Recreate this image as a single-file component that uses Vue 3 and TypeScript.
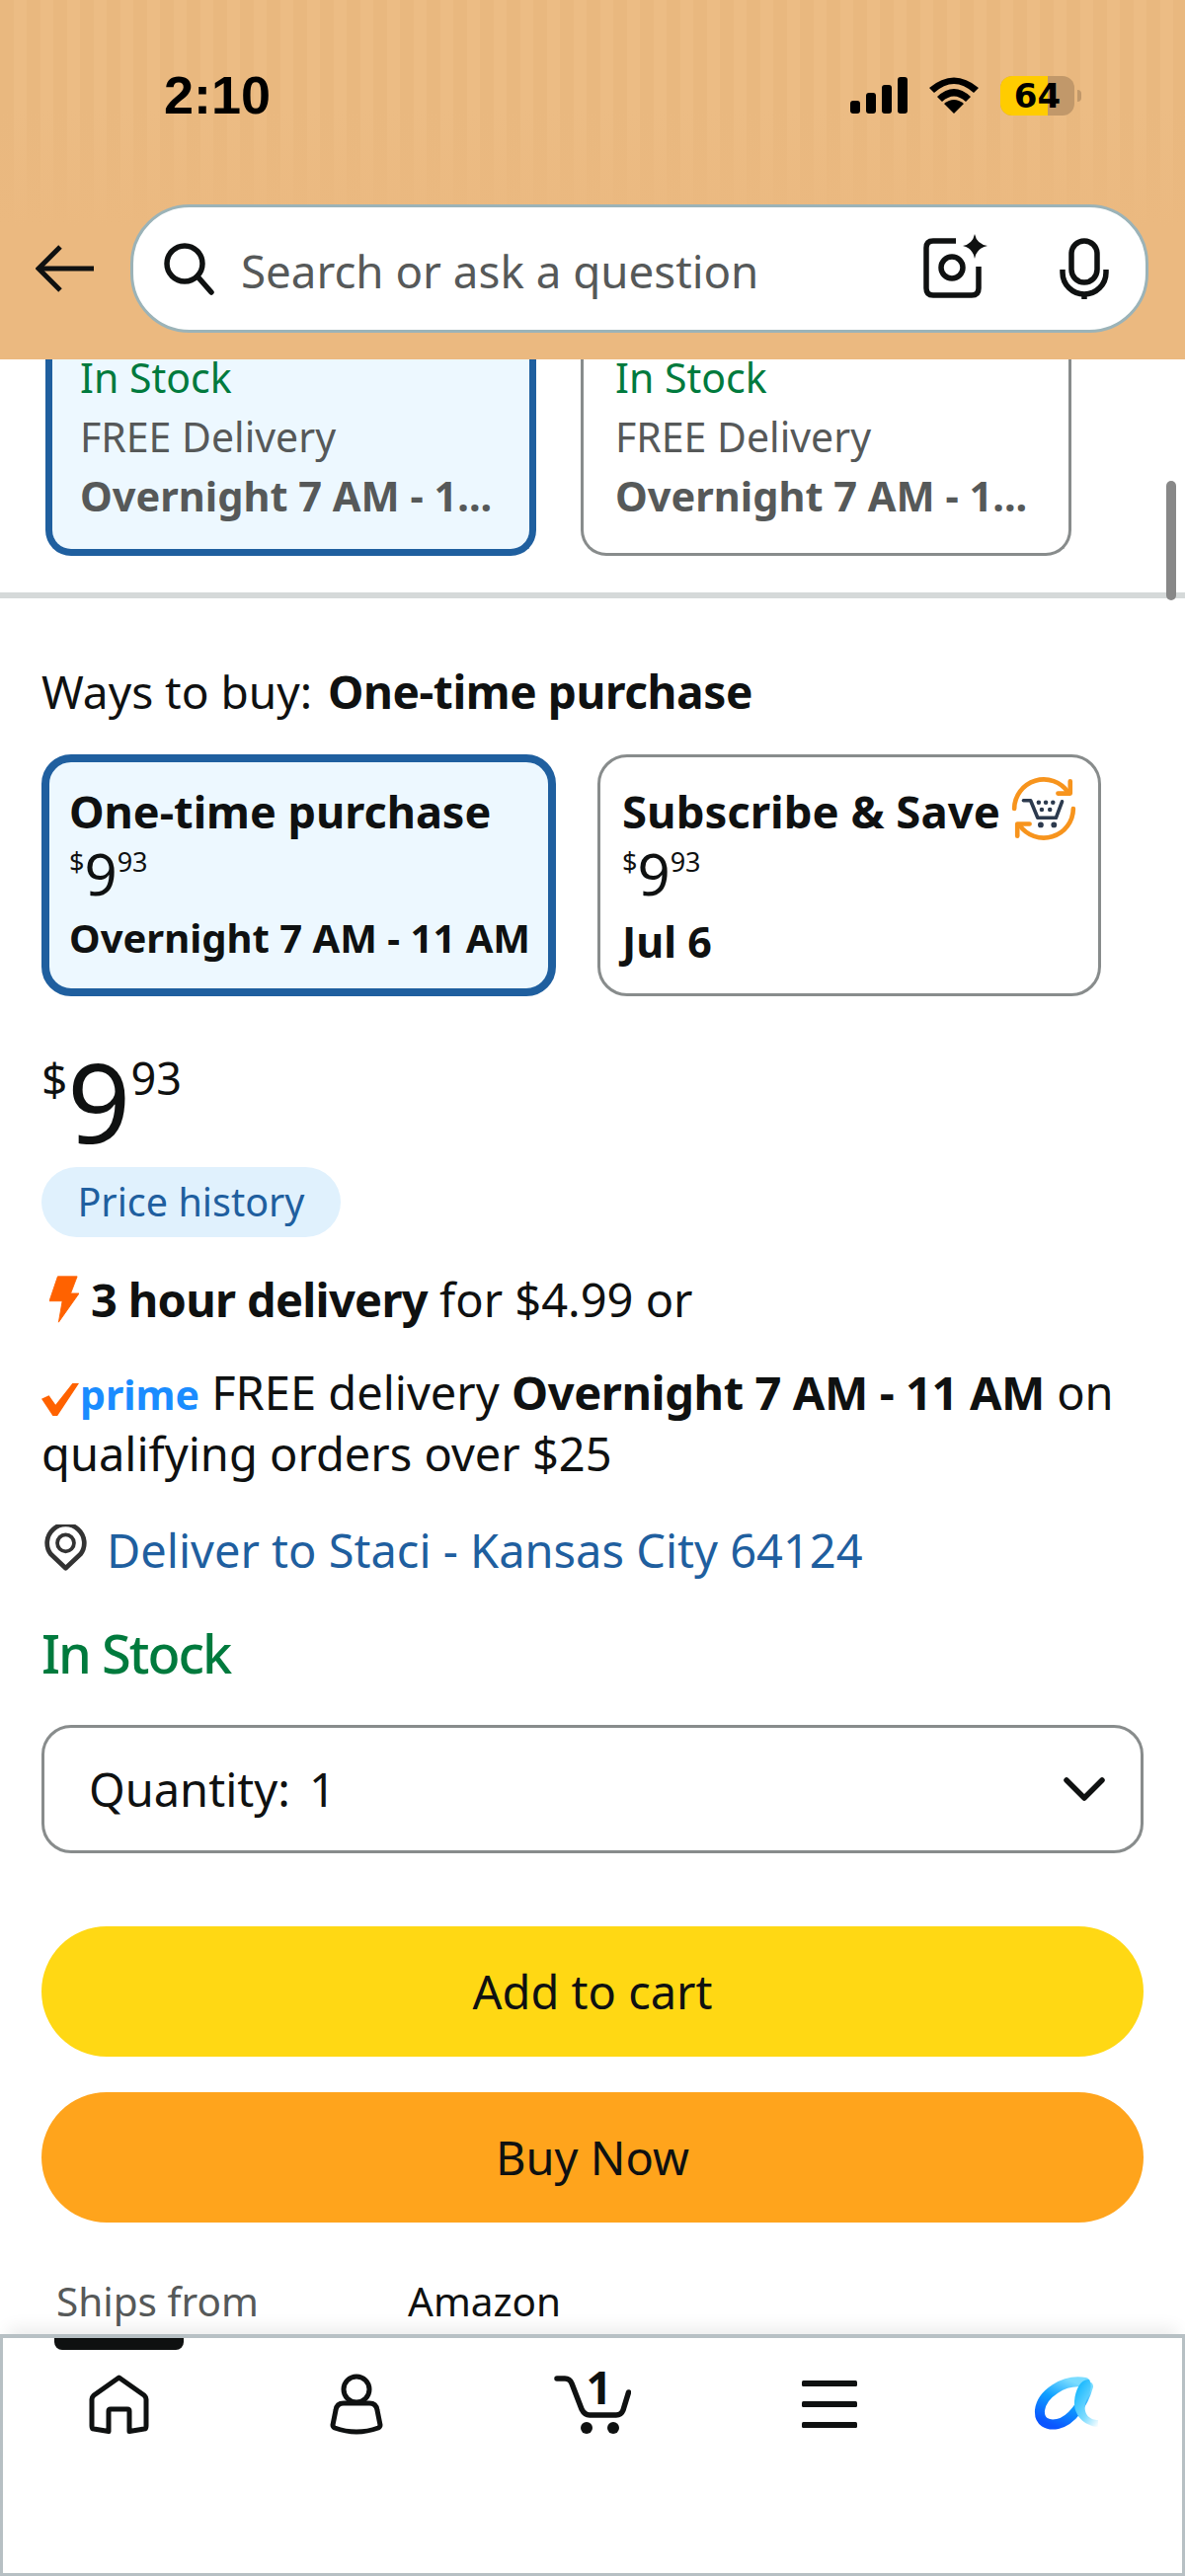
<script setup lang="ts">
interface StockCard { selected: boolean }
const stockCards: StockCard[] = [{ selected: true }, { selected: false }]
</script>

<template>
  <div class="screen">
    <header class="head">
      <div class="status">
        <span class="time">2:10</span>
        <div class="status-icons">
          <svg width="58" height="38" viewBox="0 0 58 38"><rect x="0" y="24" width="10" height="13" rx="3"/><rect x="16" y="16" width="10" height="21" rx="3"/><rect x="32" y="8" width="10" height="29" rx="3"/><rect x="48" y="0" width="10" height="37" rx="3"/></svg>
          <svg width="50" height="38" viewBox="0 0 50 38"><path d="M25 37 L15 27 Q25 19 35 27 Z"/><path d="M8 20 Q25 4 42 20 L37 25 Q25 14 13 25 Z"/><path d="M0 11 Q25 -10 50 11 L45 16 Q25 -2 5 16 Z"/></svg>
          <div class="battery"><div class="battery-fill"></div><span class="battery-num">64</span></div>
          <div class="battery-tip"></div>
        </div>
      </div>
      <div class="search-row">
        <svg class="back" width="60" height="48" viewBox="0 0 60 48" fill="none" stroke="#0f1111" stroke-width="5"><path d="M25 2 L3 24 L25 46"/><path d="M3 24 H59"/></svg>
        <div class="search">
          <svg width="54" height="54" viewBox="0 0 54 54" fill="none" stroke="#0f1111" stroke-width="5.5"><circle cx="23" cy="22" r="18"/><path d="M36 35 L50 51" stroke-linecap="round"/></svg>
          <span class="search-text">Search or ask a question</span>
          <svg class="cam" width="66" height="66" viewBox="0 0 66 66" fill="none" stroke="#0f1111" stroke-width="5.5"><path d="M33 8 H10 Q3 8 3 15 V56 Q3 63 10 63 H49 Q56 63 56 56 V34"/><circle cx="29" cy="35" r="11"/><path d="M52 1 Q54 11 65 13 Q54 15 52 26 Q50 15 40 13 Q50 11 52 1 Z" fill="#0f1111" stroke="none"/></svg>
          <svg class="mic" width="50" height="62" viewBox="0 0 50 62" fill="none" stroke="#0f1111" stroke-width="5.5"><rect x="12" y="3" width="26" height="42" rx="13"/><path d="M3 32 V35 A22 22 0 0 0 47 35 V32"/><path d="M25 56 V62"/></svg>
        </div>
      </div>
    </header>

    <main class="content">
      <div class="scrollbar"></div>
      <section class="stock-row">
        <div v-for="(c, i) in stockCards" :key="i" class="stock-card" :class="{ selected: c.selected }">
          <div class="green">In Stock</div>
          <div class="grey">FREE Delivery</div>
          <div class="grey bold">Overnight 7 AM - 1...</div>
        </div>
      </section>
      <div class="divider"></div>

      <section class="buy">
        <div class="ways">Ways to buy: <b>One-time purchase</b></div>
        <div class="options">
          <div class="option active">
            <div class="opt-title">One-time purchase</div>
            <div class="mini-price"><sup>$</sup><span>9</span><sup>93</sup></div>
            <div class="opt-date">Overnight 7 AM - 11 AM</div>
          </div>
          <div class="option sns">
            <div class="opt-title">Subscribe &amp; Save</div>
            <svg class="sns-icon" width="70" height="70" viewBox="0 0 68 68" fill="none">
              <path d="M5 34 A29 29 0 0 1 58 18 M63 34 A29 29 0 0 1 10 50" stroke="#f7941d" stroke-width="4.5" stroke-linecap="round"/>
              <path d="M48 19 H60 V7 M20 49 H8 V61" stroke="#f7941d" stroke-width="4.5" stroke-linecap="round" stroke-linejoin="round"/>
              <path d="M14 26 H21 L28 43 H46 L52 27" stroke="#2c3a4e" stroke-width="3.5" stroke-linecap="round" stroke-linejoin="round"/>
              <circle cx="31" cy="50" r="2.8" fill="#2c3a4e"/><circle cx="44" cy="50" r="2.8" fill="#2c3a4e"/>
              <circle cx="29" cy="28" r="2.2" fill="#2c3a4e"/><circle cx="36" cy="28" r="2.2" fill="#2c3a4e"/><circle cx="43" cy="28" r="2.2" fill="#2c3a4e"/><circle cx="32" cy="35" r="2.2" fill="#2c3a4e"/><circle cx="40" cy="35" r="2.2" fill="#2c3a4e"/>
            </svg>
            <div class="mini-price"><sup>$</sup><span>9</span><sup>93</sup></div>
            <div class="opt-date jul">Jul 6</div>
          </div>
        </div>

        <div class="price"><sup class="cur">$</sup><span class="whole">9</span><sup class="cents">93</sup></div>
        <div class="pill">Price history</div>

        <div class="line fast">
          <svg width="30" height="48" viewBox="0 0 32 56" preserveAspectRatio="none"><path d="M9 1 H30 L23 21 H32 L10 55 L14 30 H0 Z" fill="#ff6200" stroke="#ff6200" stroke-linejoin="round" stroke-width="1"/></svg>
          <span><b>3 hour delivery</b> for $4.99 or</span>
        </div>
        <div class="line primeline">
          <span class="prime-mark"><svg width="38" height="33" viewBox="0 0 40 38" preserveAspectRatio="none"><path d="M0 18 L8 14 L15 25 L33 0 H40 L17 38 H12 Z" fill="#ff6200"/></svg><span class="prime-word">prime</span></span>
          FREE delivery <b>Overnight 7 AM - 11 AM</b> on qualifying orders over $25
        </div>
        <div class="line deliver">
          <svg width="43" height="47" viewBox="0 0 44 50" fill="none"><path d="M22 47 L6 32 A20 20 0 1 1 38 32 Z" stroke="#333" stroke-width="5" stroke-linejoin="round"/><circle cx="22" cy="20" r="9" stroke="#333" stroke-width="4"/></svg>
          <span class="link">Deliver to Staci - Kansas City 64124</span>
        </div>
        <div class="instock">In Stock</div>

        <div class="qty">
          <span class="qty-label">Quantity: <span class="qty-num">1</span></span>
          <svg width="42" height="26" viewBox="0 0 42 26" fill="none" stroke="#0f1111" stroke-width="5.5" stroke-linecap="round" stroke-linejoin="round"><path d="M3 4 L21 22 L39 4"/></svg>
        </div>
        <div class="btn yellow">Add to cart</div>
        <div class="btn orange">Buy Now</div>
        <div class="ships"><span class="ships-k">Ships from</span><span>Amazon</span></div>
      </section>
    </main>

    <nav class="tabs">
      <div class="indicator"></div>
      <div class="tab">
        <svg width="61" height="60" viewBox="0 0 61 60" fill="none" stroke="#0f1111" stroke-width="5" stroke-linejoin="round"><path d="M30.5 3 L5 21 Q3 23 3 25 V52 Q3 55 5 55 L20 57.5 V37 Q20 35 22 35 H39 Q41 35 41 37 V57.5 L56 55 Q58 55 58 52 V25 Q58 23 56 21 Z"/></svg>
      </div>
      <div class="tab">
        <svg width="54" height="62" viewBox="0 0 54 62" fill="none" stroke="#0f1111" stroke-width="5"><circle cx="27" cy="16" r="13"/><path d="M14 30 H40 Q47 30 48 37 L51 52 Q51 54 49 55 Q27 63 5 55 Q3 54 3 52 L6 37 Q7 30 14 30 Z" stroke-linejoin="round"/></svg>
      </div>
      <div class="tab cart">
        <svg width="78" height="61" viewBox="0 0 78 61" fill="none" stroke="#0f1111" stroke-width="5.5" stroke-linecap="round" stroke-linejoin="round"><path d="M3 4 H11 Q16 4 18 9 L28 35 Q31 41 36 41 H63 Q68 41 70 36 L75.5 18"/><circle cx="33" cy="54" r="6" fill="#0f1111" stroke="none"/><circle cx="60" cy="54" r="6" fill="#0f1111" stroke="none"/></svg>
        <span class="cart-count">1</span>
      </div>
      <div class="tab">
        <svg width="56" height="48" viewBox="0 0 56 48" fill="#0f1111"><rect width="56" height="6" rx="1.5"/><rect y="21" width="56" height="6" rx="1.5"/><rect y="42" width="56" height="6" rx="1.5"/></svg>
      </div>
      <div class="tab">
        <svg width="66" height="56" viewBox="0 0 66 56" fill="none">
          <defs>
            <linearGradient id="alexaBowl" x1="0.2" y1="1" x2="0.7" y2="0"><stop offset="0" stop-color="#0a55ff"/><stop offset="0.55" stop-color="#0fa0ff"/><stop offset="1" stop-color="#7adcff"/></linearGradient>
            <linearGradient id="alexaLeaf" x1="0.2" y1="0" x2="1" y2="1"><stop offset="0" stop-color="#0db4ff"/><stop offset="0.6" stop-color="#7fdcff"/><stop offset="1" stop-color="#ffffff"/></linearGradient>
          </defs>
          <path d="M52 6 C30 2 8 18 6 34 C5 46 14 50 24 48 C38 45 50 28 55 10" stroke="url(#alexaBowl)" stroke-width="10" stroke-linecap="round"/>
          <path d="M56 3 C48 2 42 12 41 25 C40 38 50 50 65 51 L65 44 C58 44 50 40 52 28 C54 20 61 12 56 3 Z" fill="url(#alexaLeaf)"/>
        </svg>
      </div>
    </nav>
  </div>
</template>

<style scoped>
.screen {
  width: 1200px;
  height: 2609px;
  display: flex;
  flex-direction: column;
  overflow: hidden;
  background: #fff;
  color: #0f1111;
  font-family: "Noto Sans", "Liberation Sans", sans-serif;
  font-size: 47px;
}
b { letter-spacing: -0.4px; }
.head {
  flex: 0 0 364px;
  box-sizing: border-box;
  background:
    linear-gradient(to bottom, rgba(235, 185, 128, 0) 0, rgba(235, 185, 128, 0) 110px, #ebb980 230px),
    repeating-linear-gradient(to right, #e9b87f 0, #e9b87f 14px, #ecbc84 14px, #ecbc84 27px);
  position: relative;
  z-index: 2;
}
.status {
  height: 207px;
  box-sizing: border-box;
  padding: 66px 0 0 166px;
  display: flex;
  align-items: flex-start;
  justify-content: space-between;
}
.time {
  font-family: "Liberation Sans", sans-serif;
  font-weight: 700;
  font-size: 54px;
  line-height: 60px;
  color: #000;
}
.status-icons {
  display: flex;
  align-items: center;
  gap: 22px;
  padding: 11px 0 0;
  margin-right: 105px;
}
.battery {
  position: relative;
  width: 75px;
  height: 40px;
  border-radius: 12px;
  background: #c1986a;
  overflow: hidden;
  text-align: center;
}
.battery-fill {
  position: absolute;
  left: 0;
  top: 0;
  bottom: 0;
  width: 48px;
  background: #ffcc00;
}
.battery-num {
  position: relative;
  font-family: "DejaVu Sans", sans-serif;
  font-weight: 700;
  font-size: 34px;
  line-height: 40px;
  color: #000;
  display: block;
}
.battery-tip {
  width: 4px;
  height: 12px;
  background: #c1986a;
  border-radius: 0 4px 4px 0;
  margin-left: -19px;
}
.search-row {
  display: flex;
  align-items: center;
  padding-left: 36px;
}
.back { margin-right: 36px; }
.search {
  width: 1031px;
  height: 130px;
  box-sizing: border-box;
  background: #fff;
  border: 3px solid #9bb3b8;
  border-radius: 60px;
  display: flex;
  align-items: center;
  padding: 0 37px 0 29px;
}
.search-text {
  flex: 1;
  margin-left: 26px;
  color: #565959;
  font-size: 45.7px;
  padding-top: 4px;
}
.cam { margin-right: 72px; margin-top: -6px; }
.content {
  flex: 1;
  position: relative;
  overflow: hidden;
}
.scrollbar {
  position: absolute;
  left: 1181px;
  top: 123px;
  width: 10px;
  height: 121px;
  border-radius: 5px;
  background: #888;
}
.stock-row {
  display: flex;
  gap: 45px;
  padding-left: 46px;
  height: 199px;
}
.stock-card {
  width: 497px;
  height: 199px;
  box-sizing: border-box;
  border: 3px solid #888c8c;
  border-top: 0;
  border-radius: 0 0 26px 26px;
  padding-left: 32px;
  font-size: 41px;
}
.stock-card.selected {
  border: 7px solid #1f5f9f;
  border-top: 0;
  background: #edf8ff;
  padding-left: 28px;
}
.stock-card > div { line-height: 60px; }
.stock-card .green { margin-top: -12px; }
.green { color: #007a3d; }
.grey { color: #565959; }
.bold { font-weight: 700; font-size: 41.5px; white-space: nowrap; }
.divider {
  height: 6px;
  margin-top: 37px;
  background: #d5d9d9;
}
.buy { padding: 64px 42px 0; }
.ways { line-height: 60px; font-size: 46px; }
.ways b { margin-left: 4px; }
.options {
  display: flex;
  gap: 42px;
  margin-top: 34px;
}
.option {
  position: relative;
  height: 245px;
  box-sizing: border-box;
  width: 510px;
  border: 3px solid #888c8c;
  border-radius: 30px;
  padding: 23px 0 0 22px;
  background: #fff;
}
.option.active {
  width: 521px;
  border: 8px solid #1f5f9f;
  background: #edf8ff;
  padding: 19px 0 0 20px;
}
.opt-title { font-weight: 700; font-size: 45px; line-height: 62px; }
.sns .opt-title { font-size: 45.5px; }
.mini-price { height: 64px; display: flex; align-items: flex-start; }
.sns .mini-price { margin-top: 1px; }
.mini-price sup { font-size: 27px; line-height: 40px; }
.mini-price span { font-size: 58px; line-height: 66px; margin-top: -1px; }
.opt-date { font-weight: 700; font-size: 40px; line-height: 58px; margin-top: 4px; }
.option .jul { margin-top: 8px; font-size: 43px; }
.sns-icon { position: absolute; left: 414px; top: 17px; }
.price {
  display: flex;
  align-items: flex-start;
  margin-top: 50px;
  height: 118px;
}
.cur { font-size: 46px; line-height: 66px; }
.whole { font-size: 112px; line-height: 112px; }
.cents { font-size: 45px; line-height: 66px; }
.pill {
  width: 303px;
  height: 71px;
  margin-top: 5px;
  border-radius: 36px;
  background: #e0f1fd;
  color: #1f5f9f;
  font-size: 39.5px;
  line-height: 71px;
  text-align: center;
}
.line { line-height: 62px; }
.fast { display: flex; align-items: center; gap: 12px; margin-top: 32px; padding-left: 8px; height: 62px; }
.fast b { letter-spacing: -0.7px; }
.primeline { margin-top: 32px; }
.prime-mark { display: inline-flex; align-items: center; vertical-align: -6px; }
.prime-word { color: #1a8cff; font-weight: 700; font-size: 41px; line-height: 40px; margin-left: 1px; margin-top: -12px; }
.deliver { display: flex; align-items: center; gap: 20px; margin-top: 36px; }
.deliver svg { margin-left: 3px; margin-top: -6px; }
.link { color: #1f5f9f; }
.instock { color: #007a3d; font-size: 54px; line-height: 70px; margin-top: 38px; letter-spacing: -2px; font-weight: 500; }
.qty {
  height: 130px;
  box-sizing: border-box;
  margin-top: 38px;
  border: 3px solid #888c8c;
  border-radius: 30px;
  display: flex;
  align-items: center;
  justify-content: space-between;
  padding: 0 36px 0 45px;
}
.qty-num { margin-left: 7px; }
.btn {
  height: 132px;
  border-radius: 66px;
  text-align: center;
  line-height: 132px;
}
.yellow { background: #ffd814; margin-top: 74px; }
.orange { background: #ffa41c; margin-top: 36px; }
.ships { display: flex; margin-top: 50px; font-size: 40.5px; line-height: 60px; padding-left: 15px; }
.ships-k { width: 356px; color: #565959; }
.tabs {
  flex: 0 0 245px;
  box-sizing: border-box;
  position: relative;
  border: 3px solid #b7c0c4;
  border-top-width: 4px;
  background: #fff;
  box-shadow: 0 -14px 16px -8px rgba(15, 17, 17, 0.08);
  display: grid;
  grid-template-columns: repeat(5, 239.75px);
  padding-top: 32px;
  align-items: start;
  justify-items: center;
  z-index: 2;
}
.tab { position: relative; height: 70px; display: flex; align-items: center; margin-right: 4px; }
.indicator {
  position: absolute;
  left: 52px;
  top: 0;
  width: 131px;
  height: 12px;
  background: #0f1111;
  border-radius: 0 0 8px 8px;
}
.cart-count {
  position: absolute;
  left: 32px;
  top: -8px;
  font-size: 46px;
  line-height: 50px;
  font-weight: 700;
}
</style>
